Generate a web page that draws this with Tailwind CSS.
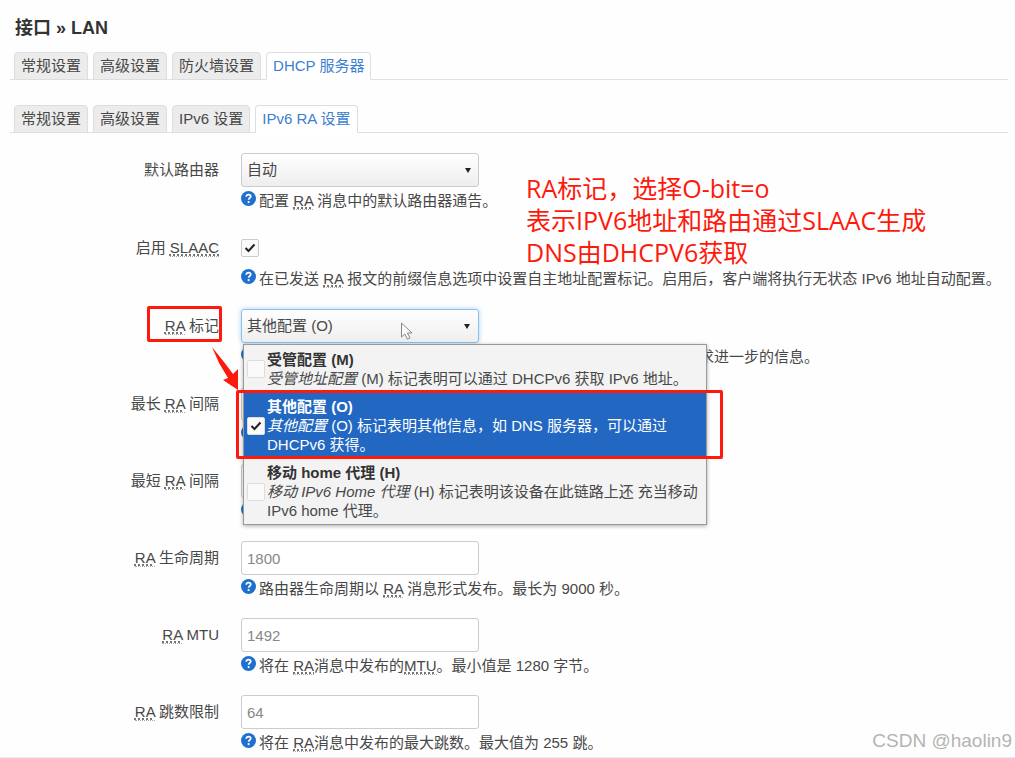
<!DOCTYPE html>
<html lang="zh-CN">
<head>
  <meta charset="UTF-8">
  <meta name="viewport" content="width=device-width, initial-scale=1.0">
  <title>接口 » LAN</title>
  <script src="https://cdn.jsdelivr.net/npm/@tailwindcss/browser@4"></script>
</head>
<body class="bg-[#fefefe] font-['Liberation_Sans','Noto_Sans_CJK_SC',sans-serif] text-[15px] leading-5 text-[#484848]">
  <svg class="hidden">
    <symbol id="help" viewBox="0 0 16 16">
      <circle cx="8" cy="8" r="8" fill="#1f6fcf"/>
      <path d="M5.6 6.2C5.6 4.6 6.6 3.8 8 3.8s2.4.8 2.4 2.1c0 1.5-2.3 1.7-2.3 3.4" fill="none" stroke="#fff" stroke-width="1.8"/>
      <circle cx="8.1" cy="11.8" r="1.2" fill="#fff"/>
    </symbol>
    <symbol id="check" viewBox="0 0 18 18">
      <path d="M4.5 9l3 3 6-6.5" fill="none" stroke="#222" stroke-width="2"/>
    </symbol>
  </svg>

  <main class="relative overflow-hidden border-b border-[#ececec] pt-4 pr-[7px] pl-2.5">
    <h1 class="px-[5px] text-lg leading-6 font-bold text-[#333]">接口 » LAN</h1>

    <!-- interface tabs -->
    <nav class="mt-3 flex gap-[5px] border-b border-[#e0e0e0] px-1">
      <a href="#" class="-mb-px h-7 rounded-t border border-[#ddd] bg-[#ececec] px-1.5 leading-[26px]">常规设置</a>
      <a href="#" class="-mb-px h-7 rounded-t border border-[#ddd] bg-[#ececec] px-1.5 leading-[26px]">高级设置</a>
      <a href="#" class="-mb-px h-7 rounded-t border border-[#ddd] bg-[#ececec] px-1.5 leading-[26px]">防火墙设置</a>
      <a href="#" class="-mb-px h-7 rounded-t border border-[#ddd] border-b-white bg-white px-1.5 leading-[26px] text-[#3b7fd0]">DHCP 服务器</a>
    </nav>

    <!-- dhcp tabs -->
    <nav class="mt-[25px] flex gap-[5px] border-b border-[#e0e0e0] px-1">
      <a href="#" class="-mb-px h-7 rounded-t border border-[#ddd] bg-[#ececec] px-1.5 leading-[26px]">常规设置</a>
      <a href="#" class="-mb-px h-7 rounded-t border border-[#ddd] bg-[#ececec] px-1.5 leading-[26px]">高级设置</a>
      <a href="#" class="-mb-px h-7 rounded-t border border-[#ddd] bg-[#ececec] px-1.5 leading-[26px]">IPv6 设置</a>
      <a href="#" class="-mb-px h-7 rounded-t border border-[#ddd] border-b-white bg-white px-1.5 leading-[26px] text-[#3b7fd0]">IPv6 RA 设置</a>
    </nav>

    <form class="mt-5">
      <div class="relative flex h-[78px] gap-[22px]">
        <label for="router" class="w-[209px] shrink-0 text-right leading-[34px]">默认路由器</label>
        <div class="min-w-0 flex-1">
          <div class="relative w-[238px]">
            <select id="router" class="block h-[34px] w-full appearance-none rounded-[3px] border border-[#ccc] bg-linear-to-b from-white to-[#eee] px-[5px]">
              <option>自动</option>
            </select>
            <svg class="pointer-events-none absolute top-[15px] right-2 h-[5px] w-[6px]" viewBox="0 0 6 5"><path d="M0 0h6L3 5z" fill="#222"/></svg>
          </div>
          <p class="mt-1 flex gap-[3px]"><svg class="h-[15px] w-[15px] shrink-0"><use href="#help"/></svg><span>配置 <abbr title="Router Advertisement" class="border-b border-dotted border-[#aaa] underline-offset-2">RA</abbr> 消息中的默认路由器通告。</span></p>
        </div>
        <p class="absolute top-[19px] left-[516px] font-['Open_Sans','Noto_Sans_CJK_SC',sans-serif] text-[25px] leading-8 whitespace-nowrap text-[#fd1a0c]">RA标记，选择O-bit=o<br>表示IPV6地址和路由通过SLAAC生成<br>DNS由DHCPV6获取</p>
      </div>

      <div class="flex h-[78px] gap-[22px]">
        <label for="slaac" class="w-[209px] shrink-0 text-right leading-[34px]">启用 <abbr title="Stateless Address Auto Config" class="border-b border-dotted border-[#aaa] underline-offset-2">SLAAC</abbr></label>
        <div class="min-w-0 flex-1">
          <div class="flex h-[34px] items-center">
            <span class="relative h-[18px] w-[18px]">
              <input id="slaac" type="checkbox" checked class="block h-[18px] w-[18px] appearance-none rounded-xs border border-[#ccc] bg-[#fafafa]">
              <svg class="pointer-events-none absolute inset-0 h-[18px] w-[18px]"><use href="#check"/></svg>
            </span>
          </div>
          <p class="mt-1 flex gap-[3px]"><svg class="h-[15px] w-[15px] shrink-0"><use href="#help"/></svg><span>在已发送 <abbr title="Router Advertisement" class="border-b border-dotted border-[#aaa] underline-offset-2">RA</abbr> 报文的前缀信息选项中设置自主地址配置标记。启用后，客户端将执行无状态 IPv6 地址自动配置。</span></p>
        </div>
      </div>

      <div class="relative z-10 flex h-[78px] gap-[22px]">
        <label for="flags" class="w-[209px] shrink-0 text-right leading-[34px]"><abbr title="Router Advertisement" class="border-b border-dotted border-[#aaa] underline-offset-2">RA</abbr> 标记</label>
        <div class="relative min-w-0 flex-1">
          <button id="flags" type="button" class="flex h-[34px] w-[238px] items-center justify-between rounded-[3px] border border-[#8fc0ea] bg-linear-to-b from-white to-[#eee] pr-2 pl-[5px] shadow-[0_0_5px_#a9d2f5]">
            <span>其他配置 (O)</span>
            <svg class="h-[5px] w-[6px]" viewBox="0 0 6 5"><path d="M0 0h6L3 5z" fill="#222"/></svg>
          </button>
          <p class="mt-1 flex gap-[3px]"><svg class="h-[15px] w-[15px] shrink-0"><use href="#help"/></svg><span>在 RA 报文中发送的标志，例如指示客户端通过有状态 DHCPv6 请求进一步的信息。</span></p>

          <!-- open menu -->
          <div class="absolute top-[35px] left-0.5 w-[464px] border border-[#999] bg-[#f3f3f3] leading-[19px] shadow-[0_1px_4px_#00000055]">
            <label class="flex items-center gap-0.5 pt-[5px] pb-1 pl-[3px]">
              <input type="checkbox" class="h-[18px] w-[18px] shrink-0 appearance-none rounded-xs border border-[#ddd] bg-[#fafafa]">
              <span><strong class="block text-[#333]">受管配置 (M)</strong><em>受管地址配置</em> (M) 标记表明可以通过 DHCPv6 获取 IPv6 地址。</span>
            </label>
            <label class="flex items-center gap-0.5 bg-[#2268c2] pt-[5px] pb-1 pl-[3px] text-white">
              <span class="relative h-[18px] w-[18px] shrink-0">
                <input type="checkbox" checked class="block h-[18px] w-[18px] appearance-none rounded-xs border border-[#ddd] bg-[#fafafa]">
                <svg class="pointer-events-none absolute inset-0 h-[18px] w-[18px]"><use href="#check"/></svg>
              </span>
              <span><strong class="block">其他配置 (O)</strong><em>其他配置</em> (O) 标记表明其他信息，如 DNS 服务器，可以通过 DHCPv6 获得。</span>
            </label>
            <label class="flex items-center gap-0.5 pt-[5px] pb-1 pl-[3px]">
              <input type="checkbox" class="h-[18px] w-[18px] shrink-0 appearance-none rounded-xs border border-[#ddd] bg-[#fafafa]">
              <span><strong class="block text-[#333]">移动 home 代理 (H)</strong><em>移动 IPv6 Home 代理</em> (H) 标记表明该设备在此链路上还 充当移动 IPv6 home 代理。</span>
            </label>
          </div>

          <!-- mouse pointer -->
          <svg class="absolute top-3 left-[159px] h-[20px] w-[14px]" viewBox="0 0 14 20"><path d="M1.5 2v14l3.3-3 2.6 5.2 2.6-1.3-2.6-4.9h4.6z" fill="#fafafa" stroke="#888" stroke-width="1"/></svg>
        </div>

        <!-- red marks -->
        <div class="absolute -top-[3px] left-[137px] h-9 w-[75px] rounded-xs border-3 border-[#fd1a0c]"></div>
        <div class="absolute top-[81px] left-[226px] h-[69px] w-[487px] rounded-xs border-3 border-[#fd1a0c]"></div>
        <svg class="absolute top-[38px] left-[200px] h-[44px] w-[32px]" viewBox="0 0 32 44"><path d="M2 0L14 15 23 27 28 22 28 43 13 33 18 31 9 16z" fill="#fd1a0c"/></svg>
      </div>

      <div class="flex h-[77px] gap-[22px]">
        <label for="maxint" class="w-[209px] shrink-0 text-right leading-[34px]">最长 <abbr title="Router Advertisement" class="border-b border-dotted border-[#aaa] underline-offset-2">RA</abbr> 间隔</label>
        <div class="min-w-0 flex-1">
          <input id="maxint" type="text" placeholder="600" class="block h-[34px] w-[238px] rounded-[3px] border border-[#ccc] bg-white px-[5px] placeholder:text-[#888]">
          <p class="mt-1"><svg class="h-[15px] w-[15px]"><use href="#help"/></svg></p>
        </div>
      </div>

      <div class="flex h-[77px] gap-[22px]">
        <label for="minint" class="w-[209px] shrink-0 text-right leading-[34px]">最短 <abbr title="Router Advertisement" class="border-b border-dotted border-[#aaa] underline-offset-2">RA</abbr> 间隔</label>
        <div class="min-w-0 flex-1">
          <input id="minint" type="text" placeholder="200" class="block h-[34px] w-[238px] rounded-[3px] border border-[#ccc] bg-white px-[5px] placeholder:text-[#888]">
          <p class="mt-1"><svg class="h-[15px] w-[15px]"><use href="#help"/></svg></p>
        </div>
      </div>

      <div class="flex h-[77px] gap-[22px]">
        <label for="lifetime" class="w-[209px] shrink-0 text-right leading-[34px]"><abbr title="Router Advertisement" class="border-b border-dotted border-[#aaa] underline-offset-2">RA</abbr> 生命周期</label>
        <div class="min-w-0 flex-1">
          <input id="lifetime" type="text" placeholder="1800" class="block h-[34px] w-[238px] rounded-[3px] border border-[#ccc] bg-white px-[5px] placeholder:text-[#888]">
          <p class="mt-1 flex gap-[3px]"><svg class="h-[15px] w-[15px] shrink-0"><use href="#help"/></svg><span>路由器生命周期以 <abbr title="Router Advertisement" class="border-b border-dotted border-[#aaa] underline-offset-2">RA</abbr> 消息形式发布。最长为 9000 秒。</span></p>
        </div>
      </div>

      <div class="flex h-[77px] gap-[22px]">
        <label for="mtu" class="w-[209px] shrink-0 text-right leading-[34px]"><abbr title="Router Advertisement" class="border-b border-dotted border-[#aaa] underline-offset-2">RA</abbr> MTU</label>
        <div class="min-w-0 flex-1">
          <input id="mtu" type="text" placeholder="1492" class="block h-[34px] w-[238px] rounded-[3px] border border-[#ccc] bg-white px-[5px] placeholder:text-[#888]">
          <p class="mt-1 flex gap-[3px]"><svg class="h-[15px] w-[15px] shrink-0"><use href="#help"/></svg><span>将在 <abbr title="Router Advertisement" class="border-b border-dotted border-[#aaa] underline-offset-2">RA</abbr>消息中发布的<abbr title="Maximum Transmission Unit" class="border-b border-dotted border-[#aaa] underline-offset-2">MTU</abbr>。最小值是 1280 字节。</span></p>
        </div>
      </div>

      <div class="flex gap-[22px] pb-1">
        <label for="hops" class="w-[209px] shrink-0 text-right leading-[34px]"><abbr title="Router Advertisement" class="border-b border-dotted border-[#aaa] underline-offset-2">RA</abbr> 跳数限制</label>
        <div class="min-w-0 flex-1">
          <input id="hops" type="text" placeholder="64" class="block h-[34px] w-[238px] rounded-[3px] border border-[#ccc] bg-white px-[5px] placeholder:text-[#888]">
          <p class="mt-1 flex gap-[3px]"><svg class="h-[15px] w-[15px] shrink-0"><use href="#help"/></svg><span>将在 <abbr title="Router Advertisement" class="border-b border-dotted border-[#aaa] underline-offset-2">RA</abbr>消息中发布的最大跳数。最大值为 255 跳。</span></p>
        </div>
      </div>
    </form>

    <p class="absolute right-[3px] bottom-1 text-[19px] leading-6 text-[#b4b4b4]">CSDN @haolin9</p>
  </main>
</body>
</html>
